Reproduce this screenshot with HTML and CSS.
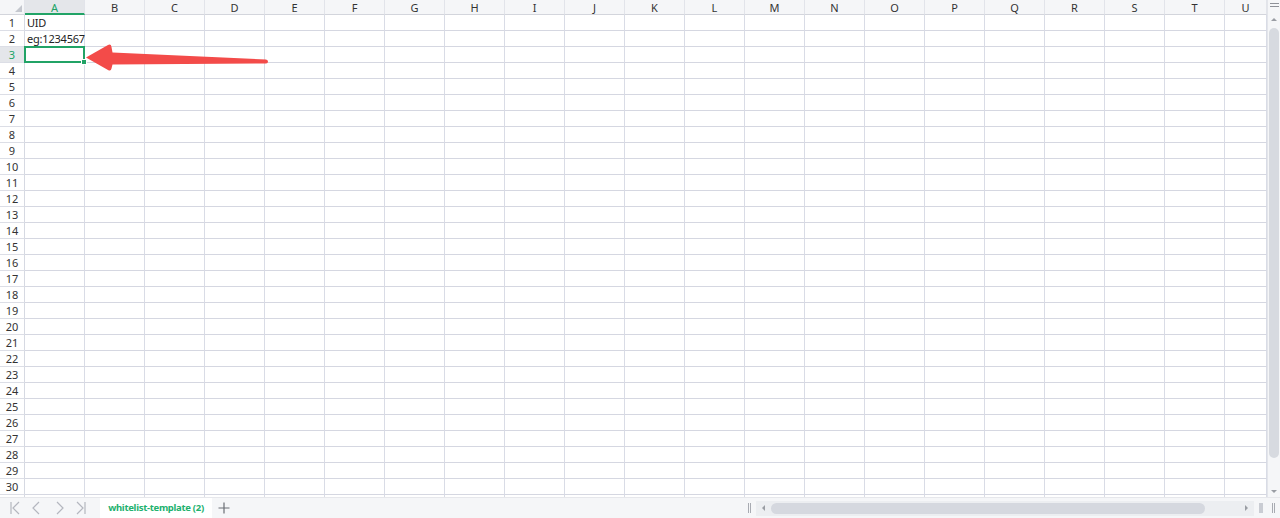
FILE: index.html
```html
<!DOCTYPE html>
<html lang="en">
<head>
  <meta charset="UTF-8">
  <meta name="viewport" content="width=device-width, initial-scale=1.0">
  <title>whitelist-template (2)</title>
  <link rel="stylesheet" href="styles.css">
</head>
<body>
  <div id="planilha">
    <div class="area">
      <div class="grade" id="grade"></div>
      <!-- seta de destaque sobre a célula A3 -->
      <svg class="seta" width="280" height="80" viewBox="0 0 280 80">
        <path d="M86 57.5 L108 45 Q111 43.5 111.5 47 L112.5 52.5 L266 59.5 Q268 60 268 61.5 Q268 63.3 266 63.5 L112.5 64.5 L111.5 68.5 Q111 71.5 108 70 Z" fill="#f34b49"/>
      </svg>
    </div>

    <div class="vscroll">
      <div class="menu"><span></span><span></span></div>
      <div class="seta-cima"></div>
      <div class="trilho"><div class="polegar"></div></div>
      <div class="seta-baixo"></div>
    </div>

    <div class="abas">
      <div class="nav">
        <svg width="12" height="14" viewBox="0 0 12 14"><path d="M2 1 V13 M10 1 L4 7 L10 13" fill="none" stroke="#b4b7bf" stroke-width="1.2"/></svg>
        <svg width="12" height="14" viewBox="0 0 12 14"><path d="M8 1 L2 7 L8 13" fill="none" stroke="#b4b7bf" stroke-width="1.2"/></svg>
        <svg width="12" height="14" viewBox="0 0 12 14"><path d="M4 1 L10 7 L4 13" fill="none" stroke="#b4b7bf" stroke-width="1.2"/></svg>
        <svg width="12" height="14" viewBox="0 0 12 14"><path d="M2 1 L8 7 L2 13 M10 1 V13" fill="none" stroke="#b4b7bf" stroke-width="1.2"/></svg>
      </div>
      <div class="aba">whitelist-template (2)</div>
      <div class="nova">
        <svg width="12" height="12" viewBox="0 0 12 12"><path d="M6 0.5 V11.5 M0.5 6 H11.5" stroke="#6b6e75" stroke-width="1.2"/></svg>
      </div>
      <div class="hscroll">
        <span class="divisor"></span>
        <div class="htrilho">
          <span class="tri-esq"></span>
          <div class="hpolegar"></div>
          <span class="tri-dir"></span>
        </div>
        <span class="fim"></span>
      </div>
      <div class="canto"><span class="divisor"></span></div>
    </div>
  </div>

  <script>
    let grade = document.getElementById('grade');
    let colunas = 'ABCDEFGHIJKLMNOPQRSTU'.split('');
    let dados = { '1A': 'UID', '2A': 'eg:1234567' };

    function celula(classe, texto) {
      let d = document.createElement('div');
      d.className = classe;
      if (texto) d.textContent = texto;
      grade.appendChild(d);
      return d;
    }

    // cabeçalho de colunas
    celula('canto-sup');
    colunas.forEach(function (c) {
      celula(c === 'A' ? 'cab ativo' : 'cab', c);
    });

    // linhas numeradas
    for (let l = 1; l <= 31; l++) {
      celula(l === 3 ? 'num ativo' : 'num', String(l));
      colunas.forEach(function (c) {
        let classe = 'cel';
        if (l === 3 && c === 'A') classe += ' sel';
        celula(classe, dados[l + c]);
      });
    }
  </script>
</body>
</html>
```

FILE: styles.css
```css
body {
  margin: 0;
  font-family: "Noto Sans", "Open Sans", sans-serif;
  background-color: #fff;
  color: #222;
  overflow: hidden;
}

#planilha {
  width: 1280px;
  height: 518px;
  display: grid;
  grid-template-columns: 1fr 13px;
  grid-template-rows: 497px 21px;
}

.area {
  position: relative;
  overflow: hidden;
}

.grade {
  display: grid;
  grid-template-columns: 25px repeat(20, 60px) 42px;
  grid-template-rows: 15px;
  grid-auto-rows: 16px;
}

.canto-sup,
.cab {
  background-color: #f5f6f8;
  border-bottom: 1px solid #d3d5dc;
  border-right: 1px solid #e2e4ea;
  box-sizing: border-box;
}

.canto-sup {
  position: relative;
}

.canto-sup::after {
  content: "";
  position: absolute;
  right: 2px;
  bottom: 2px;
  border-style: solid;
  border-width: 0 0 7px 7px;
  border-color: transparent transparent #c4c7ce transparent;
}

.cab {
  font-size: 11px;
  line-height: 16px;
  text-align: center;
  color: #333;
}

.cab.ativo {
  background-color: #e4e6ea;
  color: #21a366;
  border-bottom: 2px solid #21a366;
}

.num {
  font-size: 11px;
  line-height: 16px;
  text-align: center;
  color: #333;
  background-color: #fff;
  border-right: 1px solid #d6d9e2;
  border-bottom: 1px solid #dcdee6;
  box-sizing: border-box;
}

.num.ativo {
  background-color: #e4e6ea;
  color: #21a366;
}

.cel {
  font-size: 11px;
  line-height: 16px;
  letter-spacing: -0.2px;
  padding-left: 2px;
  white-space: nowrap;
  border-right: 1px solid #d9dce6;
  border-bottom: 1px solid #d5d7e1;
  box-sizing: border-box;
}

.cel.sel {
  position: relative;
  border: 2px solid #21a366;
  margin: -1px 0 0 -1px;
}

.cel.sel::after {
  content: "";
  position: absolute;
  right: -4px;
  bottom: -4px;
  width: 4px;
  height: 4px;
  background-color: #21a366;
  border: 1px solid #fff;
}

.seta {
  position: absolute;
  left: 0;
  top: 0;
  pointer-events: none;
}

/* barra de rolagem vertical */
.vscroll {
  background-color: #f5f6f8;
  border-left: 1px solid #e3e5ea;
  display: flex;
  flex-direction: column;
  align-items: center;
}

.menu {
  height: 12px;
  width: 9px;
  display: flex;
  flex-direction: column;
  gap: 2px;
  padding-top: 3px;
  box-sizing: border-box;
}

.menu span {
  height: 1px;
  background-color: #8e9198;
}

.seta-cima,
.seta-baixo {
  width: 0;
  height: 0;
  border-left: 3px solid transparent;
  border-right: 3px solid transparent;
  margin: 5px 0;
}

.seta-cima {
  border-bottom: 3px solid #9a9da4;
  margin-top: 6px;
}

.seta-baixo {
  border-top: 3px solid #9a9da4;
  margin-bottom: 4px;
}

.trilho {
  flex: 1;
  width: 100%;
  display: flex;
  justify-content: center;
  padding-top: 2px;
}

.polegar {
  width: 10px;
  height: 430px;
  border-radius: 5px;
  background-color: #d7dae0;
}

/* barra de abas */
.abas {
  grid-column: 1 / 3;
  display: flex;
  align-items: stretch;
  background-color: #f5f6f8;
  border-top: 1px solid #e6e7eb;
}

.nav {
  width: 100px;
  display: flex;
  align-items: center;
  gap: 10px;
  padding-left: 9px;
  box-sizing: border-box;
}

.nav svg {
  display: block;
}

.aba {
  width: 112px;
  background-color: #fff;
  color: #22b16e;
  font-size: 9.5px;
  font-weight: bold;
  letter-spacing: -0.3px;
  white-space: nowrap;
  text-align: center;
  line-height: 20px;
}

.nova {
  display: flex;
  align-items: center;
  padding-left: 6px;
}

.hscroll {
  margin-left: auto;
  width: 519px;
  display: flex;
  align-items: center;
  gap: 5px;
}

.divisor {
  width: 3px;
  height: 10px;
  border-left: 1px solid #a8abb2;
  border-right: 1px solid #a8abb2;
  box-sizing: border-box;
}

.htrilho {
  width: 498px;
  height: 15px;
  background-color: #eceef1;
  display: flex;
  align-items: center;
  padding: 0 6px;
  box-sizing: border-box;
  gap: 6px;
}

.tri-esq,
.tri-dir {
  width: 0;
  height: 0;
  border-top: 3px solid transparent;
  border-bottom: 3px solid transparent;
}

.tri-esq {
  border-right: 3px solid #9a9da4;
}

.tri-dir {
  border-left: 3px solid #9a9da4;
  margin-left: auto;
}

.hpolegar {
  width: 434px;
  height: 11px;
  border-radius: 6px;
  background-color: #d5d8df;
}

.fim {
  width: 4px;
  height: 10px;
  background-color: #c9ccd3;
}

.canto {
  width: 13px;
  display: flex;
  align-items: center;
  justify-content: center;
}
```
